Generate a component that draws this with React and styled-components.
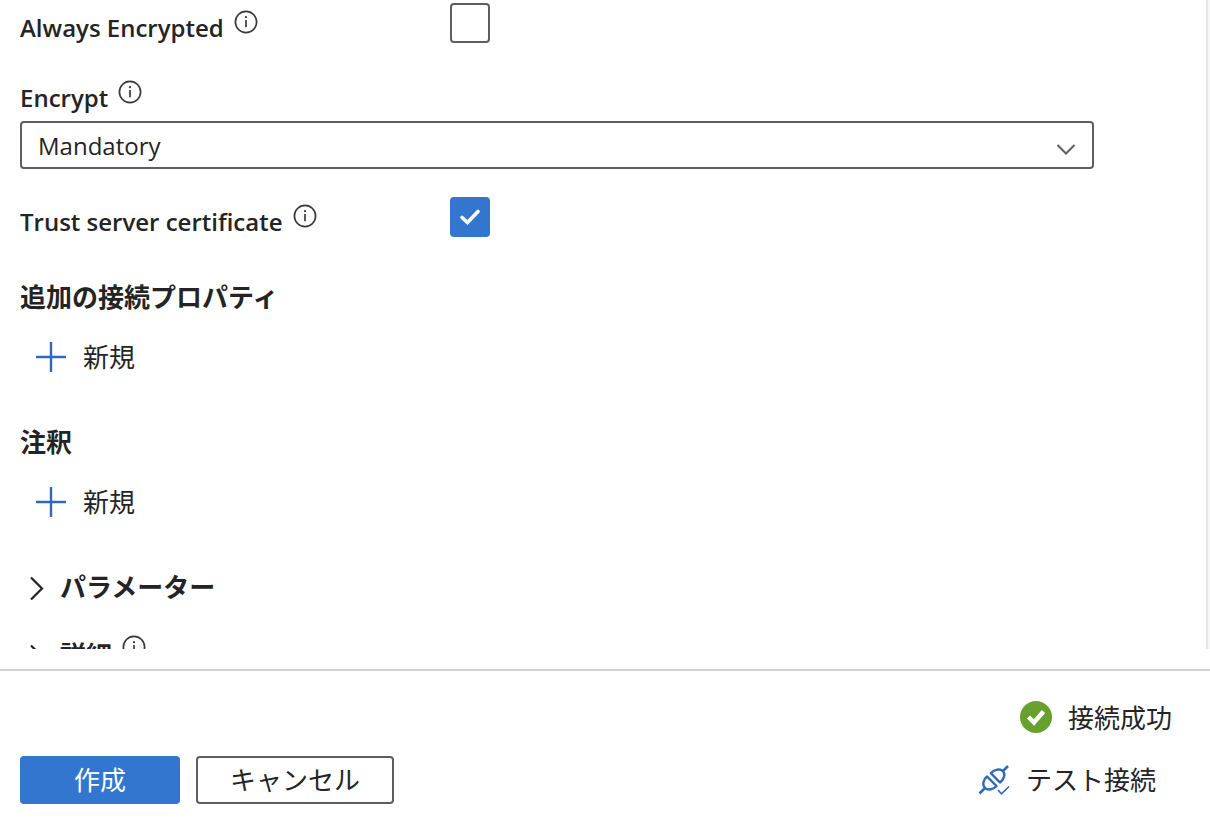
import React, { useState } from 'react';
import styled, { createGlobalStyle } from 'styled-components';

const GlobalStyle = createGlobalStyle`
  * {
    box-sizing: border-box;
  }

  body {
    margin: 0;
    background: #ffffff;
    color: #242424;
    font-family: 'Open Sans', 'Noto Sans CJK JP', sans-serif;
    font-size: 24px;
  }

  button, select, input {
    font-family: inherit;
    font-size: inherit;
    color: inherit;
    margin: 0;
  }
`;

const Page = styled.div`
  height: 100vh;
  display: flex;
  flex-direction: column;
`;

const FormPane = styled.main`
  flex: 1;
  min-height: 0;
  overflow: hidden;
  margin-bottom: 20px;
  padding: 3px 114px 0 20px;
  border-right: 2px solid #f7f7f7;
  box-shadow: inset -2px 0 0 #e6e6e6;
`;

const Field = styled.div`
  display: flex;
  flex-direction: ${props => (props.$stacked ? 'column' : 'row')};
  gap: ${props => (props.$stacked ? '8px' : '0')};
  margin-bottom: ${props => (props.$stacked ? '28px' : '30px')};
`;

const LabelBox = styled.div`
  width: 430px;
  height: 40px;
  display: flex;
  align-items: flex-start;
  gap: 10px;
  padding-top: 7px;

  label {
    line-height: 36px;
    font-weight: 600;
    white-space: nowrap;
  }
`;

const InfoSvg = styled.svg`
  width: 24px;
  height: 24px;
  flex: none;
  color: #3b3a39;
`;

const CheckWrap = styled.span`
  position: relative;
  width: 40px;
  height: 40px;

  input {
    appearance: none;
    display: block;
    width: 40px;
    height: 40px;
    border: 2px solid #605e5c;
    border-radius: 4px;
    background: #ffffff;
  }

  input:checked {
    border-color: #3276cf;
    background: #3276cf;
  }

  svg {
    position: absolute;
    inset: 0;
    pointer-events: none;
  }
`;

const SelectWrap = styled.div`
  position: relative;

  select {
    appearance: none;
    display: block;
    width: 100%;
    height: 48px;
    padding: 0 56px 0 16px;
    border: 2px solid #605e5c;
    border-radius: 4px;
    background: #ffffff;
  }

  svg {
    position: absolute;
    top: 20px;
    right: 18px;
    pointer-events: none;
  }
`;

const Sections = styled.div`
  padding-top: 10px;
`;

const Section = styled.section`
  display: flex;
  flex-direction: column;
  align-items: flex-start;
  gap: 20px;
  margin-bottom: 45px;
`;

const Heading = styled.h2`
  margin: 0;
  font-size: 26px;
  font-weight: 700;
  line-height: 40px;
`;

const PlainButton = styled.button`
  display: flex;
  align-items: center;
  gap: 16px;
  height: 40px;
  padding: 0;
  border: 0;
  background: none;
  font-size: 26px;
  line-height: 40px;
  cursor: pointer;
`;

const AddButton = styled(PlainButton)`
  padding-left: 15px;
`;

const Expander = styled(PlainButton)`
  padding-left: 8px;
  margin-bottom: 28px;
  font-weight: 700;
`;

const ExpanderTitle = styled.span`
  display: flex;
  align-items: flex-start;
  gap: 10px;
`;

const Footer = styled.footer`
  display: flex;
  flex-direction: column;
  gap: 19px;
  padding: 26px 38px 30px 20px;
  border-top: 2px solid #d2d2d2;
`;

const Status = styled.div`
  display: flex;
  align-items: center;
  justify-content: flex-end;
  gap: 16px;
  height: 40px;
  font-size: 26px;
`;

const Actions = styled.div`
  display: flex;
  align-items: center;
  gap: 16px;
  padding-right: 16px;

  ${PlainButton} {
    margin-left: auto;
  }
`;

const ActionButton = styled.button`
  min-width: 160px;
  height: 48px;
  padding: 0 32px;
  border: 2px solid ${props => (props.$primary ? '#3276cf' : '#605e5c')};
  border-radius: 4px;
  background: ${props => (props.$primary ? '#3276cf' : '#ffffff')};
  color: ${props => (props.$primary ? '#ffffff' : '#242424')};
  font-size: 26px;
  line-height: 40px;
  cursor: pointer;
`;

const InfoIcon = () => (
  <InfoSvg viewBox="0 0 24 24" fill="none" aria-hidden="true">
    <circle cx="12" cy="12" r="10.6" stroke="currentColor" strokeWidth="1.7" />
    <path d="M12 10v7.2" stroke="currentColor" strokeWidth="1.7" />
    <circle cx="12" cy="7.2" r="1.1" fill="currentColor" />
  </InfoSvg>
);

const PlusIcon = () => (
  <svg width="32" height="32" viewBox="0 0 32 32" aria-hidden="true">
    <path d="M16 1v30M1 16h30" stroke="#2f69bd" strokeWidth="2.4" />
  </svg>
);

const ChevronRight = () => (
  <svg width="16" height="26" viewBox="0 0 16 26" fill="none" aria-hidden="true">
    <path d="M3 3.5L14 14.5 3 25.5" stroke="#242424" strokeWidth="2.2" />
  </svg>
);

const PlugIcon = () => (
  <svg width="32" height="32" viewBox="0 0 32 32" fill="none" stroke="#2f69bd" aria-hidden="true">
    <path d="M1.5 29.5l5.5-5.5M25 7l5-5" strokeWidth="2.6" />
    <path d="M9 12.5L18.5 22c-3 3.600-8.500 4.600-11.500 1.800S5.200 15.500 9 12.500z" strokeWidth="2.4" strokeLinejoin="round" />
    <path d="M12.8 9.2L22 18.500c3.800-3 5.800-8.300 3-11.300S16.500 5.200 12.800 9.200z" strokeWidth="2.4" strokeLinejoin="round" />
    <path d="M20 26l3.5 3.800L31 22.500" strokeWidth="1.6" />
  </svg>
);

function CheckField({ id, label, initial = false }) {
  const [checked, setChecked] = useState(initial);

  return (
    <Field>
      <LabelBox>
        <label htmlFor={id}>{label}</label>
        <InfoIcon />
      </LabelBox>
      <CheckWrap>
        <input id={id} type="checkbox" checked={checked} onChange={e => setChecked(e.target.checked)} />
        {checked && (
          <svg width="40" height="40" viewBox="0 0 40 40" fill="none">
            <path d="M12 20.5l5.500 5L28 14.5" stroke="#fff" strokeWidth="3.6" strokeLinecap="round" />
          </svg>
        )}
      </CheckWrap>
    </Field>
  );
}

function ListSection({ title }) {
  return (
    <Section>
      <Heading>{title}</Heading>
      <AddButton type="button">
        <PlusIcon />
        新規
      </AddButton>
    </Section>
  );
}

export default function App() {
  return (
    <Page>
      <GlobalStyle />
      <FormPane>
        <CheckField id="always-encrypted" label="Always Encrypted" />
        <Field $stacked>
          <LabelBox>
            <label htmlFor="encrypt">Encrypt</label>
            <InfoIcon />
          </LabelBox>
          <SelectWrap>
            <select id="encrypt" defaultValue="mandatory">
              <option value="mandatory">Mandatory</option>
              <option value="optional">Optional</option>
              <option value="strict">Strict</option>
            </select>
            <svg width="20" height="16" viewBox="0 0 20 16" fill="none" aria-hidden="true">
              <path d="M1.5 4l8.500 8.500L18.5 4" stroke="#605e5c" strokeWidth="2" />
            </svg>
          </SelectWrap>
        </Field>
        <CheckField id="trust-certificate" label="Trust server certificate" initial />

        <Sections>
          <ListSection title="追加の接続プロパティ" />
          <ListSection title="注釈" />

          <Expander type="button" aria-expanded="false">
            <ChevronRight />
            パラメーター
          </Expander>
          <Expander type="button" aria-expanded="false">
            <ChevronRight />
            <ExpanderTitle>
              詳細
              <InfoIcon />
            </ExpanderTitle>
          </Expander>
        </Sections>
      </FormPane>

      <Footer>
        <Status role="status">
          <svg width="32" height="32" viewBox="0 0 32 32" fill="none" aria-hidden="true">
            <circle cx="16" cy="16" r="16" fill="#67a02c" />
            <path d="M8.5 16l5.500 5.500L23.5 10.5" stroke="#fff" strokeWidth="4.5" />
          </svg>
          接続成功
        </Status>
        <Actions>
          <ActionButton type="button" $primary>作成</ActionButton>
          <ActionButton type="button">キャンセル</ActionButton>
          <PlainButton type="button">
            <PlugIcon />
            テスト接続
          </PlainButton>
        </Actions>
      </Footer>
    </Page>
  );
}
